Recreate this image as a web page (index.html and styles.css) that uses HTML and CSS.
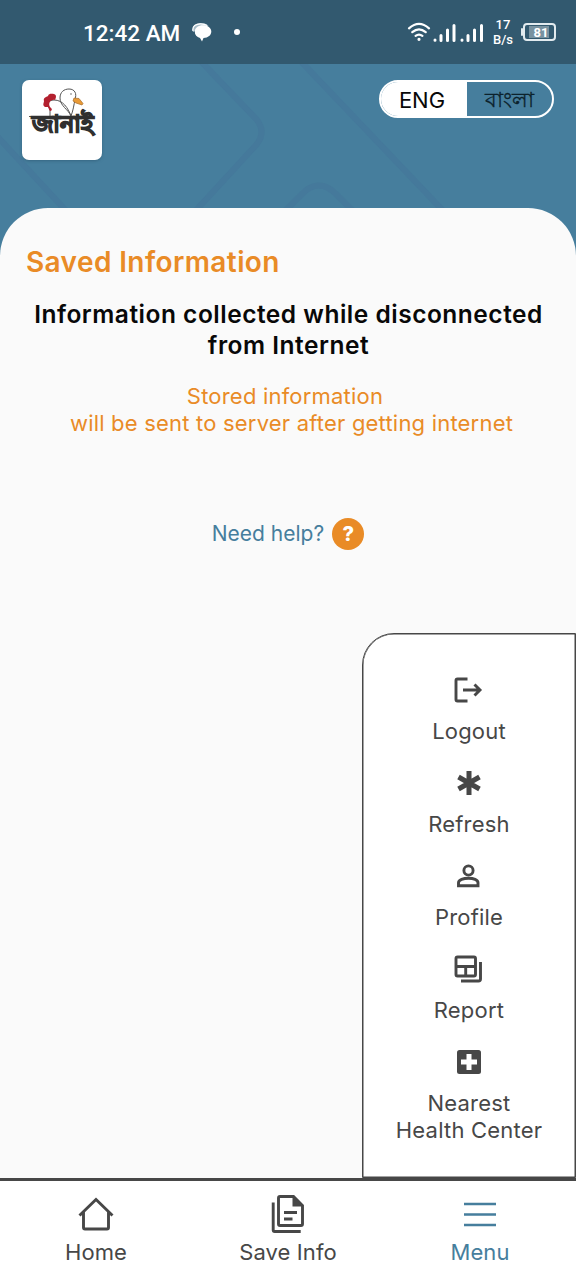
FILE: index.html
```html
<!DOCTYPE html>
<html lang="en">
<head>
<meta charset="utf-8">
<title>Saved Information</title>
<link rel="stylesheet" href="styles.css">
</head>
<body>
<div class="app">
  <header class="status">
    <span class="clock">12:42 AM</span>
    <svg class="chat" width="20" height="19" viewBox="0 0 20 19"><path d="M1 9C-1 3 4 0 9 0c3 0 6 1 7.500 3" fill="#a9bdc8"/><path d="M1 8C0 3 4 .8 8.500.8c3 0 5 .5 6.500 1.700" fill="none" stroke="#fff" stroke-width="1.200"/><path d="M11 2.200c4.800 0 8.300 2.500 8.300 6.400 0 3.700-3.200 6.300-7.800 6.500L10 18.500 8 15C4.800 14 2.800 11.800 2.800 8.700c0-4 3.500-6.500 8.200-6.500z" fill="#fff"/></svg>
    <span class="dot"></span>
    <div class="signals">
      <svg width="24" height="20" viewBox="0 0 24 20" fill="none" stroke="#fff" stroke-width="2.200" stroke-linecap="round"><path d="M2 6.300Q12-2.500 22 6.300M5.300 10.200q6.700-5.700 13.400 0M8.600 13.900q3.400-2.700 6.800 0"/><circle cx="12" cy="17.300" r=".7" fill="#fff" stroke-width="1.800"/></svg>
      <svg class="bars" width="52" height="20" viewBox="0 0 52 20" stroke="#fff" stroke-width="3" stroke-linecap="round"><path d="M2 16v.2M8 11.500v5M14.500 6v10.500M21 1.500v15M29 16v.2M35 11.500v5M41.500 6v10.500M48.500 1.500v15"/></svg>
      <span class="rate">17<br>B/s</span>
      <span class="battery">81</span>
    </div>
  </header>

  <section class="banner">
    <svg class="pattern" width="576" height="144" viewBox="0 64 576 144" fill="none" stroke="#44749a" stroke-opacity=".5" stroke-width="6"><path d="M-4 135l74 80M192 52l65 68q9 12 0 24l-68 74M292 52l158 166M280 216l20-20q18-20 36-2l24 24"/></svg>
    <div class="logo">
      <svg width="80" height="46" viewBox="0 0 80 46" fill="#fff" stroke="#555" stroke-width="1"><path d="M28 36v-7c-4-4-2-9 4-9 9 0 14 8 17 16M49 36C46 29 38 26 38 18c0-6 4-9 9-9 6 0 8 5 6 10-1 6-2 12-4 17"/><path d="M23 27c-3-2-1-4-1-6-1-3 2-4 4-5 1-3 4-2 6-2 3 1 2 4 1 6-5-1-7 4-5 7 1 1 3 2 1 4-2 0-2-2-3-4z" fill="#b3202f" stroke="none"/><path d="m52 18 5 .5 4 5-1 1.500-6-2-3-2z" fill="#e99a35" stroke="#a66b29" stroke-width=".7"/><circle cx="49" cy="14" r=".7" fill="#444" stroke="none"/><path d="M7 36.500h65" /></svg>
      <span class="logo-text">জানাই</span>
    </div>
    <div class="lang"><span class="lang-on">ENG</span><span class="lang-off">বাংলা</span></div>
  </section>

  <main class="sheet">
    <h1 class="title">Saved Information</h1>
    <h2 class="heading">Information collected while disconnected<br>from Internet</h2>
    <p class="note"><span class="note-top">Stored information</span><br>will be sent to server after getting internet</p>
    <div class="help"><span>Need help?</span><span class="help-mark">?</span></div>
  </main>

  <aside class="menu">
    <div class="item"><svg class="icon" viewBox="0 0 32 32"><path d="M14.500 5H4.500Q3 5 3 6.500v19Q3 27 4.500 27h10M10 16h17M21.500 10.500 27 16l-5.500 5.500" class="line"/></svg><span>Logout</span></div>
    <div class="item"><svg class="icon" viewBox="0 0 32 32"><path d="M16 4v24M5.500 10l21 12M26.500 10l-21 12" fill="none" stroke="#474747" stroke-width="5"/></svg><span>Refresh</span></div>
    <div class="item"><svg class="icon" viewBox="0 0 32 32"><g class="line"><circle cx="15.500" cy="10.500" r="4.600"/><path d="M5.500 25.700v-2.900c0-3 5-4.600 10-4.600s9.500 1.600 9.500 4.600v2.900z"/></g></svg><span>Profile</span></div>
    <div class="item"><svg class="icon" viewBox="0 0 32 32"><g class="line"><rect x="3" y="4" width="19.500" height="19" rx="1.500"/><path d="M3 13.500h19.500M12.700 13.500V23M27.500 9v17q0 2-2 2H8"/></g></svg><span>Report</span></div>
    <div class="item"><svg class="icon" viewBox="0 0 32 32"><rect x="4" y="4" width="24" height="24" rx="2.500" fill="#474747"/><path d="M16 8v16M8 16h16" stroke="#fff" stroke-width="5"/></svg><span>Nearest<br>Health Center</span></div>
  </aside>

  <nav class="nav">
    <div class="tab"><svg class="tab-icon" viewBox="0 0 40 40"><g class="line"><path d="M3.500 21.500 20 5.500l16.500 16M7.500 18v15.500Q7.500 35 9 35h22q1.500 0 1.500-1.500V18"/></g></svg><span>Home</span></div>
    <div class="tab"><svg class="tab-icon" viewBox="0 0 40 40"><g class="line"><path d="M12 2.500h13.500l9 9V30q0 1.500-1.500 1.500H12q-1.500 0-1.500-1.500V4q0-1.500 1.500-1.500zM5.200 8.500V36q0 1.500 1.500 1.500h26M16 18.500h13M16 25h8.500"/></g><path d="M24.500 2v10.500H35z" fill="#474747"/></svg><span>Save Info</span></div>
    <div class="tab tab-active"><svg class="tab-icon" viewBox="0 0 40 40"><path d="M4 10h32M4 20.500h32M4 31h32" stroke="#467e9d" stroke-width="2.700"/></svg><span>Menu</span></div>
  </nav>
</div>
</body>
</html>
```
FILE: styles.css
```css
* { box-sizing: border-box; }
body { margin: 0; background: #fafafa; font-family: Inter, "Noto Sans", sans-serif; color: #474747; }
.app { position: relative; width: 576px; height: 1280px; display: flex; flex-direction: column; overflow: hidden; }

.status { height: 64px; flex: none; background: #32596f; color: #fff; display: flex; align-items: center; padding: 0 20px 0 83px; font-family: Roboto, sans-serif; }
.clock { width: 97px; font-size: 22.500px; font-weight: 500; line-height: 28px; margin-top: 2px; white-space: nowrap; }
.chat { margin-left: 12px; }
.dot { width: 6px; height: 6px; border-radius: 50%; background: #fff; margin-left: 22px; }
.signals { margin-left: auto; display: flex; align-items: center; }
.bars { margin-left: 2px; margin-top: 3px; }
.rate { width: 22px; margin-left: 7px; text-align: center; font-size: 13px; font-weight: 500; line-height: 15px; }
.battery { position: relative; width: 33px; height: 18px; margin-left: 9px; border: 2px solid #e2ebef; border-radius: 4px; background: linear-gradient(90deg, #7892a0 82%, #32596f 82%) content-box; padding: 1px 1px 1px 4px; font-size: 13px; font-weight: 700; line-height: 13px; text-align: center; }
.battery::before { content: ""; position: absolute; left: -4px; top: 3px; width: 2px; height: 8px; border-radius: 2px; background: #e2ebef; }

.banner { position: relative; height: 144px; flex: none; background: #467e9d; display: flex; justify-content: space-between; align-items: flex-start; padding: 16px 22px; }
.pattern { position: absolute; left: 0; top: 0; }
.logo { position: relative; width: 80px; height: 80px; border-radius: 7px; background: #fff; box-shadow: 0 1px 3px #28506880; display: flex; flex-direction: column; overflow: hidden; }
.logo svg { display: block; flex: none; }
.logo-text { margin-top: -20px; text-align: center; color: #303030; font-size: 24px; font-weight: 900; line-height: 36px; white-space: nowrap; -webkit-text-stroke: 1.400px #303030; }
.lang { position: relative; width: 175px; height: 38px; border: 2px solid #fff; border-radius: 19px; overflow: hidden; display: flex; color: #080808; text-align: center; line-height: 36px; }
.lang-on { width: 86px; padding-right: 4px; background: #fff; font-size: 22px; }
.lang-off { flex: 1; padding-right: 1px; font-size: 21px; color: #0c222c; -webkit-text-stroke: .3px #0c222c; }

.sheet { position: relative; flex: 1; background: linear-gradient(#467e9d 48px, #fafafa 48px); }
.sheet::before { content: ""; position: absolute; inset: 0; background: #fafafa; border-radius: 48px 48px 0 0; }
.sheet > * { position: relative; }
.title { margin: 0; padding: 36px 26px 0; color: #e98b26; font-size: 28px; line-height: 36px; font-weight: 600; letter-spacing: .4px; }
.heading { margin: 19px 0 0; padding-left: 1px; text-align: center; color: #080808; font-size: 24.500px; line-height: 31px; font-weight: 600; letter-spacing: .51px; white-space: nowrap; }
.note { margin: 22px 0 0; padding-left: 7px; text-align: center; color: #e98b26; font-size: 22px; line-height: 27px; letter-spacing: .2px; white-space: nowrap; }
.note-top { margin-left: -13px; }
.help { display: flex; justify-content: center; align-items: center; gap: 8px; margin-top: 81px; font-size: 21px; line-height: 32px; color: #467e9d; }
.help-mark { width: 32px; height: 32px; border-radius: 50%; background: #e98b26; color: #fff; font-size: 20px; font-weight: 800; text-align: center; }

.menu { position: absolute; left: 362px; right: 0; bottom: 102px; height: 545px; border: 1px solid #474747; border-radius: 32px 0 0; background: #fff; padding-top: 40px; display: flex; flex-direction: column; gap: 22px; box-shadow: inset 0 0 0 .5px #474747; }
.item { display: flex; flex-direction: column; align-items: center; gap: 12px; text-align: center; font-size: 22px; line-height: 27px; letter-spacing: .2px; }
.icon { width: 32px; height: 32px; display: block; }
.line { fill: none; stroke: #474747; stroke-width: 2.900; stroke-linejoin: miter; }

.nav { height: 102px; flex: none; position: relative; background: #fff; border-top: 3px solid #474747; display: grid; grid-template-columns: repeat(3, 1fr); }
.tab { display: flex; flex-direction: column; align-items: center; gap: 4px; padding-top: 13px; font-size: 22px; line-height: 28px; letter-spacing: .1px; }
.tab-active { color: #467e9d; }
.tab-icon { width: 40px; height: 40px; display: block; }
```
